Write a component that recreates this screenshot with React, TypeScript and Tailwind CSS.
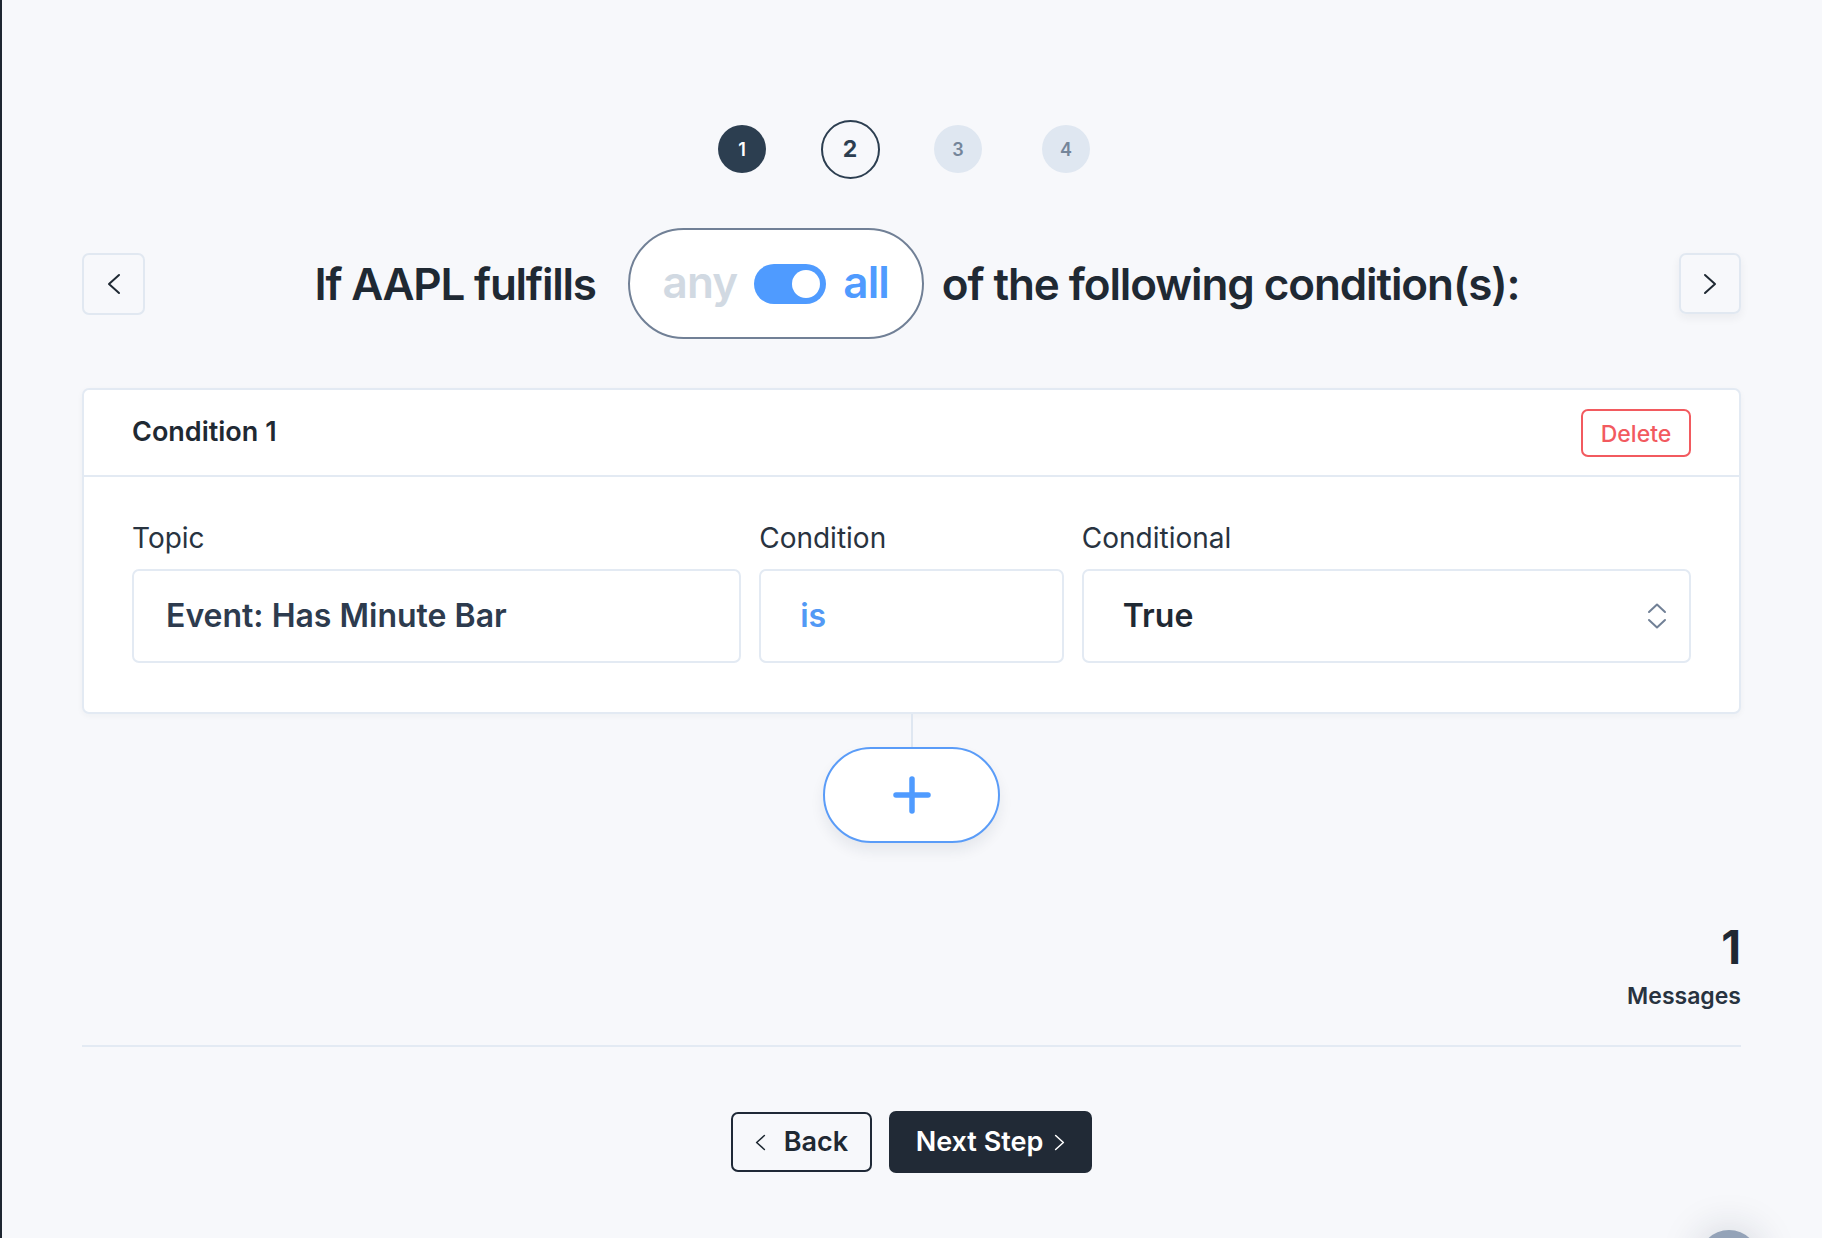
import React from 'react';

function Chevron({ dir, className }: { dir: 'left' | 'right'; className?: string }) {
  return (
    <svg width="14" height="22" viewBox="0 0 14 22" fill="none" className={className}>
      {dir === 'left' ? (
        <polyline points="12,2 2,11 12,20" stroke="currentColor" strokeWidth="2" strokeLinecap="round" strokeLinejoin="round" />
      ) : (
        <polyline points="2,2 12,11 2,20" stroke="currentColor" strokeWidth="2" strokeLinecap="round" strokeLinejoin="round" />
      )}
    </svg>
  );
}

function UpDown() {
  return (
    <svg width="20" height="26" viewBox="0 0 20 26" fill="none" className="text-[#718096]">
      <polyline points="2,9 10,1.5 18,9" stroke="currentColor" strokeWidth="2" strokeLinecap="round" strokeLinejoin="round" />
      <polyline points="2,17 10,24.5 18,17" stroke="currentColor" strokeWidth="2" strokeLinecap="round" strokeLinejoin="round" />
    </svg>
  );
}

function Step({ n, state }: { n: number; state: 'done' | 'current' | 'todo' }) {
  return (
    <div className="w-[60px] h-[60px] flex items-center justify-center">
      {state === 'done' && (
        <div className="w-[48px] h-[48px] rounded-full bg-[#2c3e50] text-white text-[18px] font-semibold flex items-center justify-center">
          {n}
        </div>
      )}
      {state === 'current' && (
        <div className="w-[59px] h-[59px] rounded-full border-2 border-[#2c3e50] text-[#2c3e50] text-[23px] font-bold flex items-center justify-center">
          {n}
        </div>
      )}
      {state === 'todo' && (
        <div className="w-[48px] h-[48px] rounded-full bg-[#dfe7f1] text-[#74859a] text-[18px] font-semibold flex items-center justify-center">
          {n}
        </div>
      )}
    </div>
  );
}

function Field({ label, children, pad }: { label: string; children: React.ReactNode; pad: string }) {
  return (
    <div className="flex flex-col">
      <div className="text-[28px] leading-[40px] text-[#283340]">{label}</div>
      <div className={`mt-[11px] h-[94px] bg-white border-2 border-[#e3eaf3] rounded-[7px] flex items-center ${pad}`}>
        {children}
      </div>
    </div>
  );
}

export default function App() {
  return (
    <div className="relative min-h-screen w-full overflow-hidden bg-[#f7f8fb] border-l-2 border-[#1e2631] font-['Inter',sans-serif] text-[#1f2933]">
      <div className="pl-[80px] pr-[81px] pt-[119px]">
        {/* stepper */}
        <div className="flex justify-center items-center gap-[48px] pr-[15px]">
          <Step n={1} state="done" />
          <Step n={2} state="current" />
          <Step n={3} state="todo" />
          <Step n={4} state="todo" />
        </div>

        {/* title row */}
        <div className="mt-[49px] flex items-center h-[111px]">
          <button className="w-[63px] h-[62px] rounded-[7px] border-2 border-[#e1e8f1] flex items-center justify-center text-[#1f2933]">
            <Chevron dir="left" />
          </button>
          <div className="flex-1 flex items-center justify-center pl-[10px]">
            <span className="text-[44px] font-semibold tracking-[-0.028em]">If AAPL fulfills</span>
            <div className="ml-[32px] mr-[18px] h-[111px] w-[296px] rounded-full border-2 border-[#718096] bg-white flex items-center justify-center gap-[17px]">
              <span className="text-[44px] font-semibold text-[#d1d9e2] tracking-[-0.02em] -mt-[4px]">any</span>
              <div className="w-[72px] h-[40px] rounded-full bg-[#4f9bff] flex items-center justify-end pr-[6px]">
                <div className="w-[28px] h-[28px] rounded-full bg-white" />
              </div>
              <span className="text-[44px] font-semibold text-[#4f9bff] tracking-[-0.02em] -mt-[4px]">all</span>
            </div>
            <span className="text-[44px] font-semibold tracking-[-0.025em]">of the following condition(s):</span>
          </div>
          <button className="w-[62px] h-[61px] rounded-[7px] border-2 border-[#e1e8f1] shadow-[0_4px_10px_rgba(30,41,59,0.06)] flex items-center justify-center text-[#1f2933]">
            <Chevron dir="right" />
          </button>
        </div>

        {/* condition card */}
        <div className="mt-[49px] bg-white border-2 border-[#e3eaf3] rounded-[7px] shadow-[0_2px_6px_rgba(30,41,59,0.04)]">
          <div className="h-[87px] px-[48px] flex items-center justify-between border-b-2 border-[#e3eaf3]">
            <span className="text-[27px] font-semibold">Condition 1</span>
            <button className="h-[48px] w-[110px] rounded-[7px] border-2 border-[#f25a5f] text-[#f25a5f] text-[23px] font-medium pt-[3px]">
              Delete
            </button>
          </div>
          <div className="px-[48px] pt-[41px] pb-[49px] grid grid-cols-[2fr_1fr_2fr] gap-x-[18px]">
            <Field label="Topic" pad="pl-[32px]">
              <span className="text-[32px] font-semibold text-[#2d3b4e]">Event: Has Minute Bar</span>
            </Field>
            <Field label="Condition" pad="pl-[39px]">
              <span className="text-[32px] font-semibold text-[#5299f5]">is</span>
            </Field>
            <Field label="Conditional" pad="pl-[39px] pr-[22px] justify-between">
              <span className="text-[32px] font-semibold text-[#1f2933]">True</span>
              <UpDown />
            </Field>
          </div>
        </div>

        {/* add condition */}
        <div className="flex flex-col items-center">
          <div className="w-[2px] h-[33px] bg-[#dfe7f1]" />
          <button className="w-[177px] h-[96px] rounded-full border-2 border-[#5a9cf8] bg-white shadow-[0_8px_14px_rgba(30,41,59,0.08)] flex items-center justify-center">
            <svg width="40" height="38" viewBox="0 0 40 38" fill="none">
              <line x1="20" y1="3" x2="20" y2="35" stroke="#4f9bff" strokeWidth="5.5" strokeLinecap="round" />
              <line x1="4" y1="19" x2="36" y2="19" stroke="#4f9bff" strokeWidth="5.5" strokeLinecap="round" />
            </svg>
          </button>
        </div>

        {/* messages */}
        <div className="mt-[81px] flex flex-col items-end">
          <span className="text-[46px] leading-none font-bold text-[#1f2933]">1</span>
          <span className="mt-[8px] text-[23px] leading-[36px] font-semibold text-[#283340]">Messages</span>
        </div>

        <div className="mt-[31px] border-t-2 border-[#e3eaf3]" />

        {/* nav */}
        <div className="mt-[64px] flex justify-center items-center gap-[17px]">
          <button className="w-[141px] h-[60px] rounded-[7px] border-2 border-[#1f2937] flex items-center justify-center gap-[18px] text-[#1f2933]">
            <Chevron dir="left" className="w-[11px] h-[17px]" />
            <span className="text-[27px] font-semibold">Back</span>
          </button>
          <button className="w-[203px] h-[62px] rounded-[7px] bg-[#212a36] flex items-center justify-center gap-[11px] text-white">
            <span className="text-[27px] font-semibold">Next Step</span>
            <Chevron dir="right" className="w-[11px] h-[17px]" />
          </button>
        </div>
      </div>

      <div className="absolute left-[1697px] top-[1230px] w-[60px] h-[60px] rounded-full bg-[#94a3b8] shadow-[0_0_40px_rgba(30,41,59,0.18)]" />
    </div>
  );
}
